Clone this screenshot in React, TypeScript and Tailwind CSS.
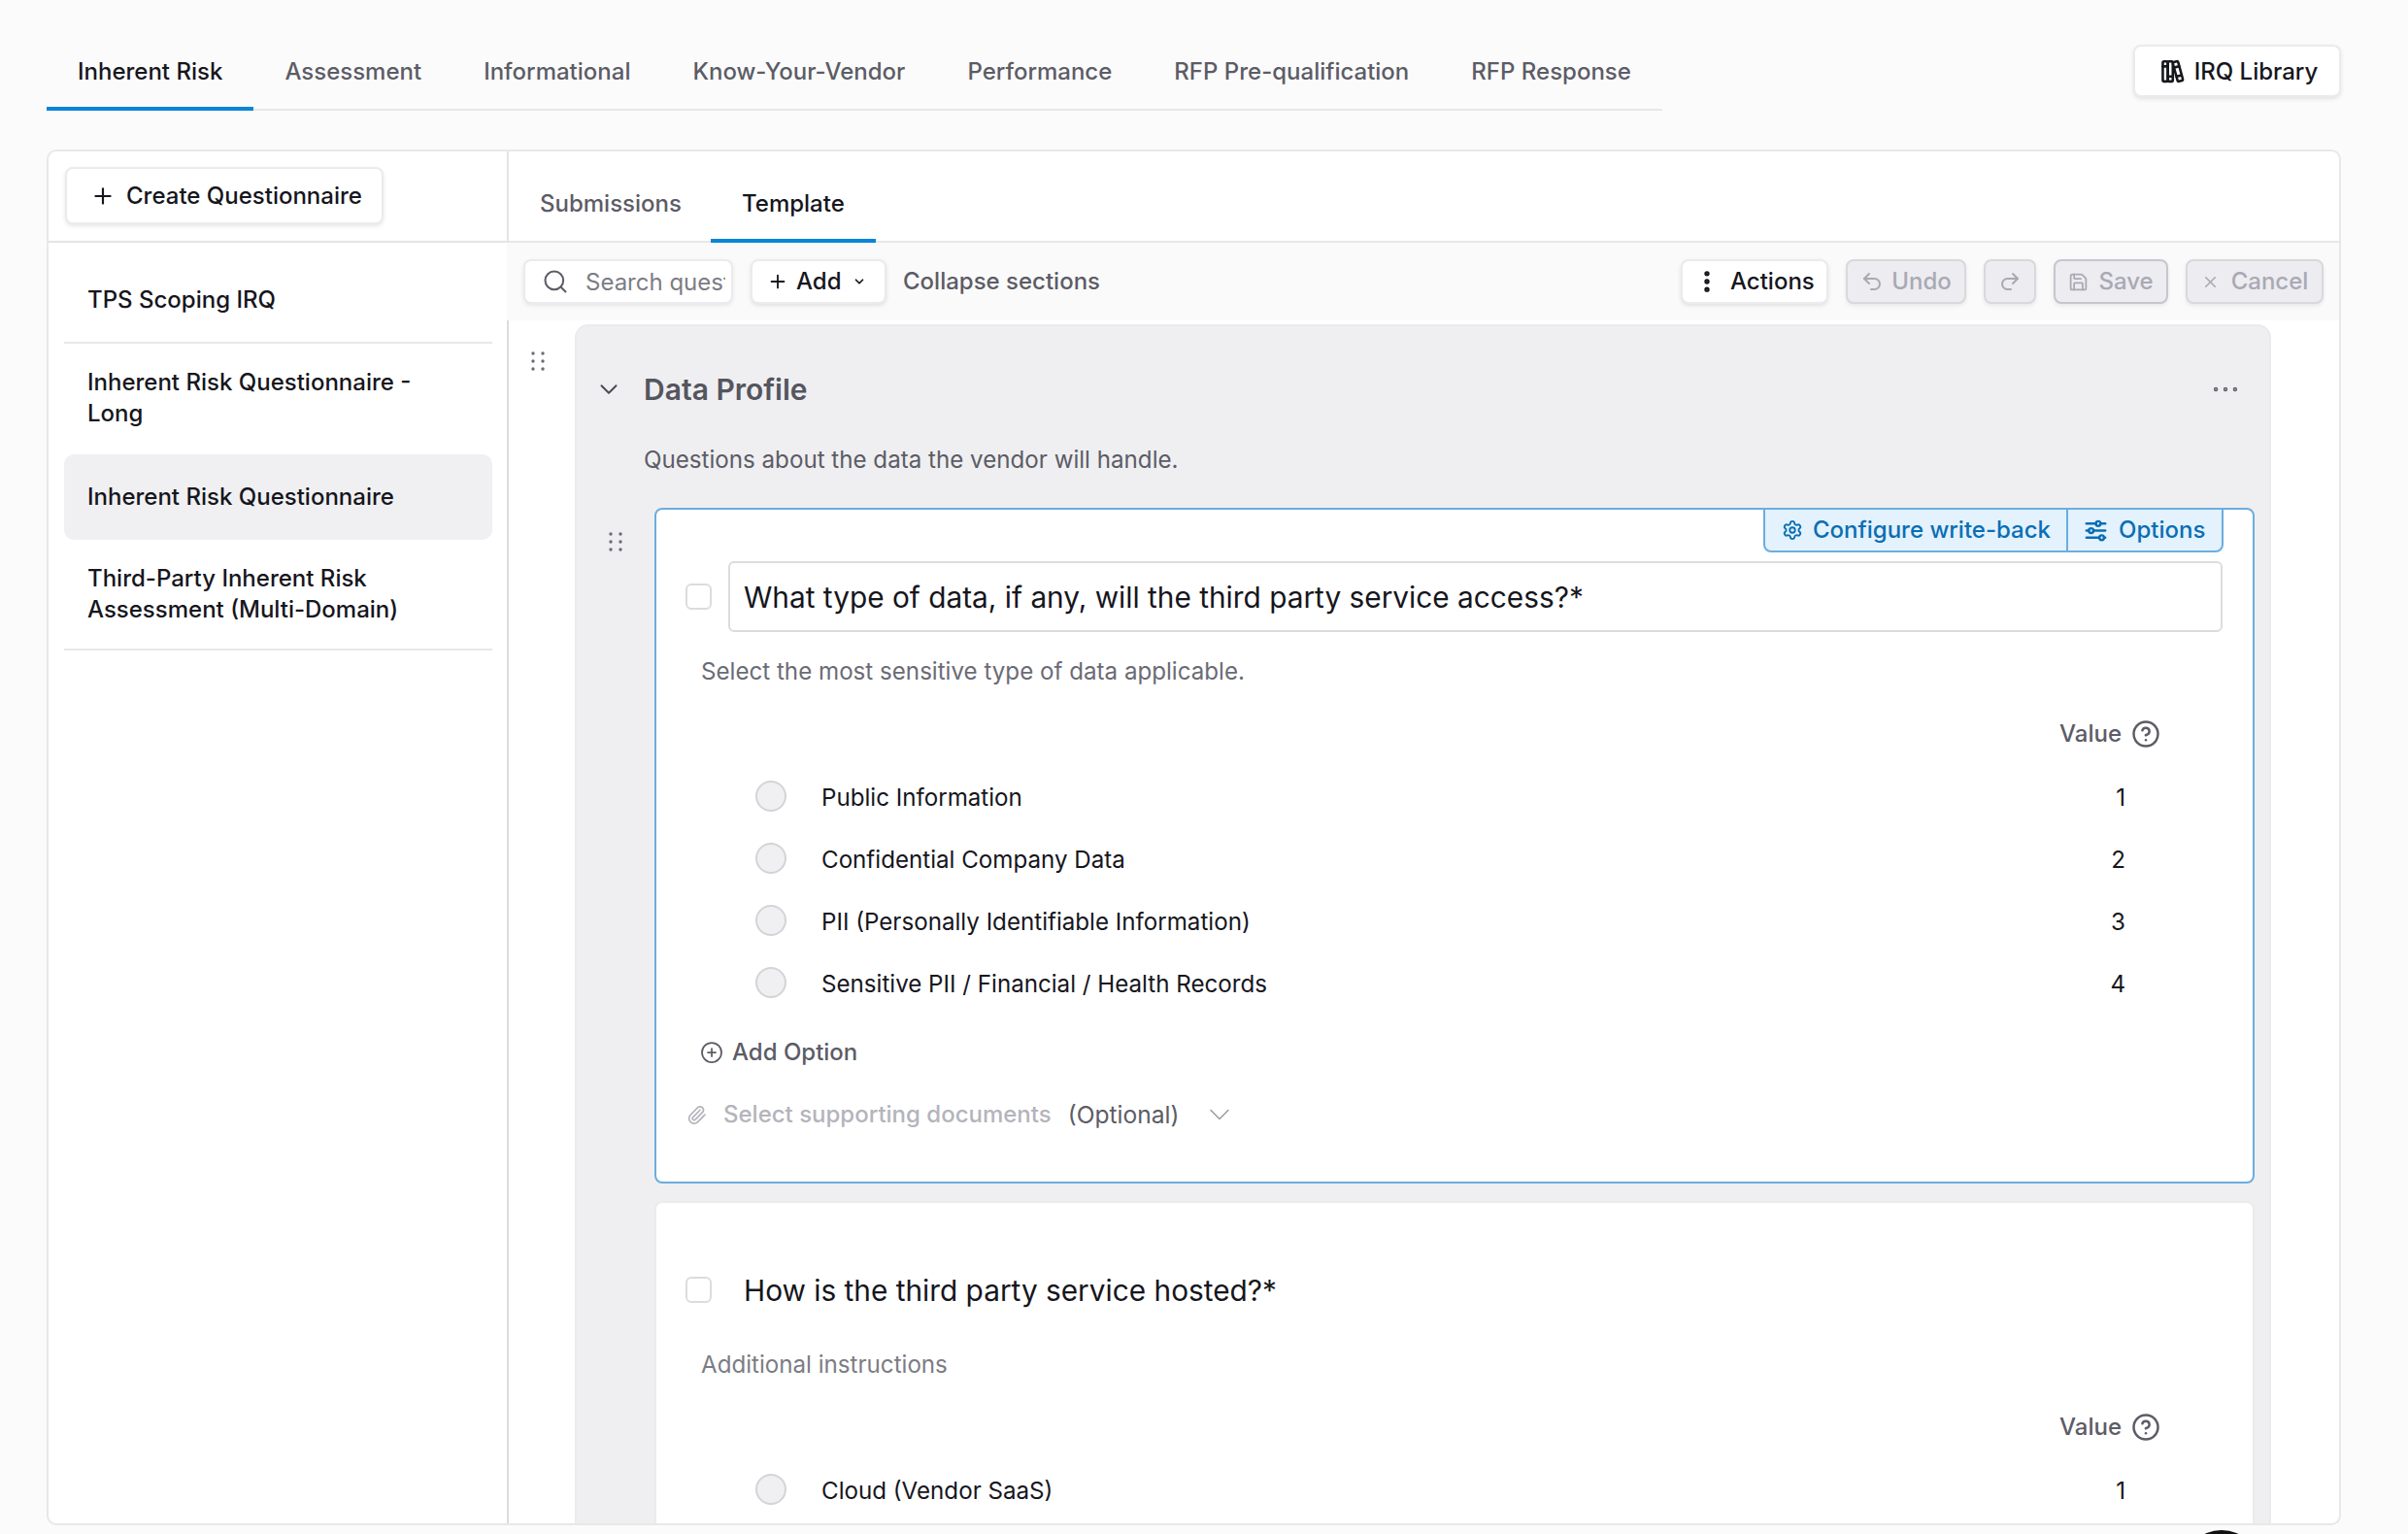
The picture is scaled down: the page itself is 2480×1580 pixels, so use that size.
import React from "react";
import {
  ChevronDown,
  CircleHelp,
  CirclePlus,
  EllipsisVertical,
  Ellipsis,
  Paperclip,
  Plus,
  Redo2,
  Save,
  Search,
  Settings,
  Undo2,
  X,
} from "lucide-react";
import { TbAdjustmentsHorizontal, TbBooks } from "react-icons/tb";

function Grip() {
  return (
    <svg width="14" height="20" viewBox="0 0 14 20" className="text-[#6b6b75]" fill="currentColor">
      <circle cx="2" cy="2" r="1.7" />
      <circle cx="12" cy="2" r="1.7" />
      <circle cx="2" cy="10" r="1.7" />
      <circle cx="12" cy="10" r="1.7" />
      <circle cx="2" cy="18" r="1.7" />
      <circle cx="12" cy="18" r="1.7" />
    </svg>
  );
}

const tabs = ["Inherent Risk", "Assessment", "Informational", "Know-Your-Vendor", "Performance", "RFP Pre-qualification", "RFP Response"];

function Check() {
  return <div className="w-[27px] h-[27px] shrink-0 rounded-[6px] border-2 border-[#dcdcdf] bg-white" />;
}

function ValueHead() {
  return (
    <div className="mt-[32px] h-[32px] flex items-center justify-end pr-[95px] gap-[10px] text-[#5c5c66] font-medium">
      <span>Value</span>
      <CircleHelp size={30} strokeWidth={2} />
    </div>
  );
}

function OptionRow({ label, value }: { label: string; value: number }) {
  return (
    <div className="h-[64px] flex items-center pl-[102px] pr-[131px] text-[#16161d] text-[24.15px]">
      <div className="w-[32px] h-[32px] rounded-full bg-[#f0f0f2] border-2 border-[#d4d4d8] shrink-0" />
      <span className="ml-[36px] flex-1 pt-[4px]">{label}</span>
      <span className="pt-[4px]">{value}</span>
    </div>
  );
}

const disabledBtn = "h-[46px] flex items-center justify-center rounded-[8px] border-2 bg-[#ececf1] text-[#a9a9b4] font-medium shadow-[0_2px_4px_rgba(0,0,0,0.08)]";
const whiteBtn = "flex items-center rounded-[8px] border-2 border-[#ebebed] bg-white text-[#16161d] font-medium shadow-[0_2px_4px_rgba(0,0,0,0.1)]";

export default function App() {
  return (
    <div className="relative w-[2480px] h-[1580px] overflow-hidden bg-[#fbfbfb] text-[24px] leading-[32px] [font-family:Inter,sans-serif]">
      {/* top bar */}
      <div className="pt-[46px] pl-[48px] pr-[69px] h-[154px] flex justify-between items-start">
        <div className="flex h-[68px] w-[1664px] border-b-2 border-[#e8e8ea]">
          {tabs.map((t, i) => (
            <div
              key={t}
              className={
                i === 0
                  ? "h-[68px] -mb-[2px] px-[32px] pt-[12px] border-b-4 border-[#0a84d6] text-[#16161d] font-medium"
                  : "h-[68px] -mb-[2px] px-[32px] pt-[12px] text-[#5c5c66] font-medium"
              }
            >
              {t}
            </div>
          ))}
        </div>
        <button className={whiteBtn + " h-[54px] w-[214px] justify-center gap-[8px]"}>
          <TbBooks size={31} />
          <span className="pt-[2px]">IRQ Library</span>
        </button>
      </div>

      {/* panel */}
      <div className="ml-[48px] w-[2363px] h-[1417px] flex border-2 border-[#e8e8ea] rounded-[10px] bg-white overflow-hidden">
        {/* sidebar */}
        <div className="w-[474px] shrink-0 flex flex-col">
          <div className="h-[94px] border-b-2 border-r-2 border-[#e4e4e7] pl-[17px] pt-[16px]">
            <button className={whiteBtn + " h-[59px] w-[328px] pl-[24px] gap-[11px]"}>
              <Plus size={26} strokeWidth={2} />
              <span>Create Questionnaire</span>
            </button>
          </div>
          <div className="pl-[16px] pr-[17px] pt-[15px] text-[#16161d] font-medium">
            <div className="h-[89px] flex items-center px-[24px] pt-[1px] border-b-2 border-[#e8e8ea]">TPS Scoping IRQ</div>
            <div className="h-[114px] flex items-center pl-[24px] pr-[40px] pb-[3px]">Inherent Risk Questionnaire - Long</div>
            <div className="h-[88px] flex items-center px-[24px] bg-[#f0f0f2] rounded-[10px]">Inherent Risk Questionnaire</div>
            <div className="h-[114px] flex items-center px-[24px] border-b-2 border-[#e8e8ea]">Third-Party Inherent Risk Assessment (Multi-Domain)</div>
          </div>
        </div>

        {/* main */}
        <div className="flex-1 min-w-0 flex flex-col">
          <div className="h-[94px] shrink-0 flex items-end border-b-2 border-[#e8e8ea] font-medium">
            <div className="w-[208px] h-[64px] -mb-[2px] pl-[32px] pt-[8px] text-[#5c5c66]">Submissions</div>
            <div className="h-[64px] -mb-[2px] px-[32px] pt-[8px] text-[#16161d] border-b-4 border-[#0a84d6]">Template</div>
          </div>

          {/* toolbar */}
          <div className="h-[80px] shrink-0 -ml-[2px] bg-[#fafafa] flex items-center pl-[17px] pr-[16px]">
            <div className="w-[216px] h-[46px] flex items-center rounded-[8px] border-2 border-[#ebebed] bg-white shadow-[0_2px_4px_rgba(0,0,0,0.08)] pl-[17px] pr-[6px] gap-[17px]">
              <Search size={28} strokeWidth={1.75} className="text-[#5c5c66] shrink-0" />
              <input
                placeholder="Search questions"
                className="min-w-0 flex-1 pt-[2px] outline-none bg-transparent text-[24px] placeholder:text-[#7c7c85]"
              />
            </div>
            <button className={whiteBtn + " ml-[18px] h-[46px] w-[140px] pl-[15px] gap-[8px]"}>
              <Plus size={22} strokeWidth={2} />
              <span>Add</span>
              <ChevronDown size={14} strokeWidth={3} className="ml-[3px]" />
            </button>
            <span className="ml-[17px] text-[#5c5c66] font-medium">Collapse sections</span>
            <div className="flex-1" />
            <button className={whiteBtn + " h-[46px] w-[152px] pl-[11px] gap-[10px]"}>
              <EllipsisVertical size={28} strokeWidth={2.6} />
              <span>Actions</span>
            </button>
            <button className={disabledBtn + " border-[#d8d8dd] ml-[18px] w-[124px] gap-[8px]"}>
              <Undo2 size={24} strokeWidth={2} />
              <span>Undo</span>
            </button>
            <button className={disabledBtn + " border-[#d8d8dd] ml-[18px] w-[54px]"}>
              <Redo2 size={24} strokeWidth={2} />
            </button>
            <button className={disabledBtn + " border-[#c6c6ce] ml-[18px] w-[118px] gap-[10px]"}>
              <Save size={21} strokeWidth={2} />
              <span>Save</span>
            </button>
            <button className={disabledBtn + " border-[#d8d8dd] ml-[18px] w-[142px] gap-[12px]"}>
              <X size={19} strokeWidth={2} />
              <span>Cancel</span>
            </button>
          </div>

          {/* content */}
          <div className="flex-1 min-h-0 flex -ml-[2px] border-l-2 border-[#dcdcdf]">
            <div className="w-[68px] shrink-0 pl-[23px] pt-[32px]">
              <Grip />
            </div>
            <div className="w-[1747px] shrink-0 mt-[4px] rounded-t-[14px] bg-[#efeff1] border-2 border-[#ebebed] h-[1600px]">
              <div className="flex items-center pt-[44px] h-[86px] pr-[28px]">
                <ChevronDown size={30} strokeWidth={1.6} className="ml-[18px] text-[#4b4b55]" />
                <span className="ml-[21px] text-[30px] leading-[40px] font-semibold text-[#55555f] flex-1">Data Profile</span>
                <Ellipsis size={34} strokeWidth={1.1} className="text-[#5c5c66]" />
              </div>
              <div className="mt-[36px] pl-[69px] text-[#5c5c66] text-[24.15px]">Questions about the data the vendor will handle.</div>

              <div className="mt-[33px] flex pr-[15px]">
                <div className="w-[80px] shrink-0 pl-[33px] pt-[25px]">
                  <Grip />
                </div>
                <div className="flex-1 min-w-0">
                  {/* card 1 */}
                  <div className="h-[696px] rounded-[8px] border-2 border-[#6caddf] bg-white">
                    <div className="flex justify-end pr-[30px] -mt-[2px]">
                      <div className="h-[46px] flex rounded-b-[8px] border-2 border-[#6caddf] bg-[#e3f2fd] text-[#0a6eb4] font-medium">
                        <div className="w-[312px] flex items-center pl-[17px] gap-[10px] border-r-2 border-[#6caddf]">
                          <Settings size={22} strokeWidth={2} />
                          <span>Configure write-back</span>
                        </div>
                        <div className="w-[158px] flex items-center pl-[14px] gap-[9px]">
                          <TbAdjustmentsHorizontal size={29} />
                          <span>Options</span>
                        </div>
                      </div>
                    </div>
                    <div className="mt-[9px] h-[73px] flex items-center pl-[30px] pr-[31px] gap-[17px]">
                      <Check />
                      <div className="flex-1 h-[73px] flex items-center pl-[14px] rounded-[6px] border-2 border-[#dcdcdc] text-[29.8px] text-[#16161d]">
                        What type of data, if any, will the third party service access?*
                      </div>
                    </div>
                    <div className="mt-[25px] pl-[46px] text-[#6b6b75] text-[24.15px]">Select the most sensitive type of data applicable.</div>
                    <ValueHead />
                    <div className="mt-[16px]">
                      <OptionRow label="Public Information" value={1} />
                      <OptionRow label="Confidential Company Data" value={2} />
                      <OptionRow label="PII (Personally Identifiable Information)" value={3} />
                      <OptionRow label="Sensitive PII / Financial / Health Records" value={4} />
                    </div>
                    <div className="mt-[24px] pl-[45px] flex items-center gap-[9px] text-[#5c5c66] font-medium">
                      <CirclePlus size={24} strokeWidth={1.75} />
                      <span>Add Option</span>
                    </div>
                    <div className="mt-[30px] pl-[31px] flex items-center text-[#b4b4bc] font-medium">
                      <Paperclip size={21} strokeWidth={2} />
                      <span className="ml-[17px]">Select supporting documents</span>
                      <span className="ml-[17px] text-[#5c5c66] font-normal text-[24.6px]">(Optional)</span>
                      <ChevronDown size={36} strokeWidth={1} className="ml-[23px] text-[#9a9aa2]" />
                    </div>
                  </div>

                  {/* card 2 */}
                  <div className="mt-[18px] h-[500px] rounded-[8px] border-2 border-[#ebebed] bg-white">
                    <div className="h-[44px]" />
                    <div className="mt-[9px] h-[73px] flex items-center pl-[30px] gap-[17px]">
                      <Check />
                      <div className="pl-[16px] text-[29.8px] text-[#16161d]">How is the third party service hosted?*</div>
                    </div>
                    <div className="mt-[25px] pl-[46px] text-[#7c7c85] text-[24.15px]">Additional instructions</div>
                    <ValueHead />
                    <div className="mt-[16px]">
                      <OptionRow label="Cloud (Vendor SaaS)" value={1} />
                    </div>
                  </div>
                </div>
              </div>
            </div>
          </div>
        </div>
      </div>

      {/* floating widget peeking at the bottom */}
      <div className="absolute left-[2248px] top-[1576px] w-[80px] h-[80px] rounded-full bg-[#111111]" />
    </div>
  );
}
